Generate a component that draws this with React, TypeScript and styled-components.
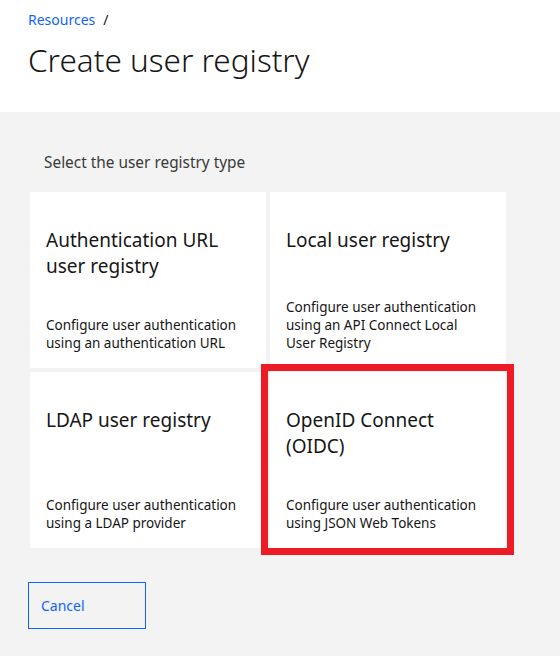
import React from "react";
import styled, { createGlobalStyle } from "styled-components";

const Global = createGlobalStyle`
  html, body { margin: 0; padding: 0; background: #f3f3f3; }
  body { font-family: "Noto Sans", "Open Sans", Arial, sans-serif; color: #161616; }
  * { box-sizing: border-box; }
`;

const Page = styled.div`
  width: 560px;
  height: 656px;
  display: flex;
  flex-direction: column;
  background: #f3f3f3;
  overflow: hidden;
`;

const Header = styled.header`
  height: 112px;
  background: #ffffff;
  padding: 11px 28px 0;
  display: flex;
  flex-direction: column;
`;

const Breadcrumb = styled.nav`
  display: flex;
  align-items: center;
  gap: 8px;
  font-size: 14px;
  line-height: 18px;
`;

const Crumb = styled.a`
  color: #0f62fe;
  text-decoration: none;
`;

const Slash = styled.span`
  color: #161616;
`;

const Title = styled.h1`
  margin: 11px 0 0;
  font-size: 31.5px;
  font-weight: 300;
  line-height: 40px;
  color: #161616;
  letter-spacing: 0;
`;

const Main = styled.main`
  flex: 1;
  padding: 41px 28px 0;
  display: flex;
  flex-direction: column;
`;

const Label = styled.p`
  margin: 0 0 19px 16px;
  font-size: 15.4px;
  line-height: 20px;
  color: #393939;
`;

const Grid = styled.div`
  margin-left: 2px;
  display: grid;
  grid-template-columns: 236px 236px;
  grid-auto-rows: 176px;
  gap: 4px;
`;

const Card = styled.div`
  position: relative;
  background: #ffffff;
  padding: 35px 16px 16px;
  display: flex;
  flex-direction: column;
  justify-content: space-between;
`;

const Highlight = styled.span`
  position: absolute;
  top: -8px;
  left: -9px;
  right: -8px;
  bottom: -7px;
  border: 7px solid #ed1c24;
  pointer-events: none;
`;

const CardTitle = styled.h2`
  margin: 0;
  font-size: 19px;
  font-weight: 400;
  line-height: 26px;
  color: #161616;
`;

const CardDesc = styled.p`
  margin: 0;
  font-size: 13.5px;
  line-height: 18px;
  color: #161616;
`;

const Actions = styled.div`
  margin-top: 34px;
  display: flex;
`;

const CancelButton = styled.button`
  width: 118px;
  height: 47px;
  border: 1px solid #0f62fe;
  background: transparent;
  color: #0f62fe;
  font-family: inherit;
  font-size: 14px;
  text-align: left;
  padding: 0 12px;
  cursor: pointer;
`;

const cards = [
  { title: "Authentication URL user registry", desc: "Configure user authentication using an authentication URL" },
  { title: "Local user registry", desc: "Configure user authentication using an API Connect Local User Registry" },
  { title: "LDAP user registry", desc: "Configure user authentication using a LDAP provider" },
  { title: "OpenID Connect (OIDC)", desc: "Configure user authentication using JSON Web Tokens", selected: true },
];

export default function App() {
  return (
    <>
      <Global />
      <Page>
        <Header>
          <Breadcrumb>
            <Crumb href="#">Resources</Crumb>
            <Slash>/</Slash>
          </Breadcrumb>
          <Title>Create user registry</Title>
        </Header>
        <Main>
          <Label>Select the user registry type</Label>
          <Grid>
            {cards.map((c) => (
              <Card key={c.title}>
                <CardTitle>{c.title}</CardTitle>
                <CardDesc>{c.desc}</CardDesc>
                {c.selected && <Highlight />}
              </Card>
            ))}
          </Grid>
          <Actions>
            <CancelButton>Cancel</CancelButton>
          </Actions>
        </Main>
      </Page>
    </>
  );
}
